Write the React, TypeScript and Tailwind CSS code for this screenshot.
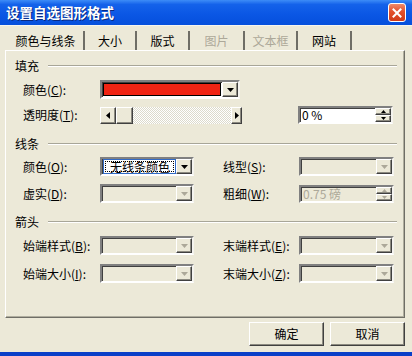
import React from "react";

const font = "font-['Noto_Sans_CJK_SC',sans-serif]";
const sunken =
  "border-2 border-t-[#808080] border-l-[#808080] border-b-white border-r-[#f4f3ee] shadow-[inset_1px_1px_0_#404040]";
const raised =
  "border border-t-white border-l-white border-b-[#404040] border-r-[#404040] shadow-[inset_-1px_-1px_0_#8c8a80]";

function Tri({ dir = "down", disabled }: { dir?: "down" | "left" | "right" | "up"; disabled?: boolean }) {
  const fill = disabled ? "#aca899" : "#000000";
  if (dir === "down")
    return (
      <svg width="7" height="4" viewBox="0 0 7 4">
        <path d="M0 0h7L3.5 4z" fill={fill} />
      </svg>
    );
  if (dir === "up")
    return (
      <svg width="5" height="3" viewBox="0 0 5 3">
        <path d="M0 3h5L2.5 0z" fill={fill} />
      </svg>
    );
  if (dir === "left")
    return (
      <svg width="4" height="7" viewBox="0 0 4 7">
        <path d="M4 0v7L0 3.5z" fill={fill} />
      </svg>
    );
  return (
    <svg width="4" height="7" viewBox="0 0 4 7">
      <path d="M0 0v7L4 3.5z" fill={fill} />
    </svg>
  );
}

function ArrowBtn({ disabled }: { disabled?: boolean }) {
  return (
    <div className={`flex h-full w-[16px] shrink-0 items-center justify-center bg-[#ece9d8] ${raised}`}>
      <Tri disabled={disabled} />
    </div>
  );
}

function Combo({ w, disabled, children }: { w: string; disabled?: boolean; children?: React.ReactNode }) {
  return (
    <div className={`flex h-[19px] ${w} ${sunken} ${disabled ? "bg-[#ece9d8]" : "bg-white"}`}>
      <div className="flex min-w-0 flex-1 items-center">{children}</div>
      <ArrowBtn disabled={disabled} />
    </div>
  );
}

function Spin({ w, disabled, value }: { w: string; disabled?: boolean; value: string }) {
  return (
    <div className={`flex h-[18px] ${w} ${sunken} ${disabled ? "bg-[#ece9d8]" : "bg-white"}`}>
      <div className={`flex flex-1 items-center pl-[2px] text-[12px] leading-none ${disabled ? "text-[#aca899]" : "text-black"}`}>
        {value}
      </div>
      <div className="flex w-[16px] flex-col">
        <div className={`flex flex-1 items-center justify-center bg-[#ece9d8] ${raised}`}>
          <Tri dir="up" disabled={disabled} />
        </div>
        <div className={`flex flex-1 items-center justify-center bg-[#ece9d8] ${raised}`}>
          <svg width="5" height="3" viewBox="0 0 5 3">
            <path d="M0 0h5L2.5 3z" fill={disabled ? "#aca899" : "#000"} />
          </svg>
        </div>
      </div>
    </div>
  );
}

function Label({ text, k, w }: { text: string; k: string; w: string }) {
  return (
    <div className={`${w} shrink-0 text-[12px] leading-none text-black`}>
      {text}(<span className="underline">{k}</span>):
    </div>
  );
}

function Header({ text }: { text: string }) {
  return (
    <div className="flex h-[16px] items-center pl-[9px] pr-[7px]">
      <span className="text-[12px] leading-none text-black">{text}</span>
      <div className="ml-[9px] h-[2px] flex-1 border-t border-b border-t-[#a8a698] border-b-white" />
    </div>
  );
}

const tabs = [
  { t: "颜色与线条", w: "w-[77px]" },
  { t: "大小", w: "w-[52px]" },
  { t: "版式", w: "w-[53px]" },
  { t: "图片", w: "w-[55px]", off: true },
  { t: "文本框", w: "w-[53px]", off: true },
  { t: "网站", w: "w-[54px]" },
];

export default function App() {
  return (
    <div className={`flex h-[356px] w-[412px] flex-col overflow-hidden bg-[#ece9d8] ${font}`}>
      {/* title bar */}
      <div className="flex h-[25px] shrink-0 items-center justify-between bg-[linear-gradient(180deg,#3d8cf7_0%,#1462ea_18%,#0a56e4_60%,#0650dc_100%)] pl-[6px] pr-[6px]">
        <span className="text-[13.5px] font-bold leading-none text-white [text-shadow:1px_1px_0_#0a2a80]">
          设置自选图形格式
        </span>
        <div className="flex h-[19px] w-[18px] items-center justify-center rounded-[3px] border border-white bg-[linear-gradient(180deg,#f08a6a_0%,#e2502c_45%,#d03a18_100%)]">
          <svg width="10" height="10" viewBox="0 0 10 10">
            <path d="M1.5 1.5l7 7M8.5 1.5l-7 7" stroke="#fff" strokeWidth="2" strokeLinecap="square" />
          </svg>
        </div>
      </div>
      <div className="h-[1px] shrink-0 bg-[#f6f5ee]" />

      <div className="flex flex-1 flex-col pl-[5px] pr-[7px]">
        {/* tabs */}
        <div className="flex h-[24px] items-end pl-[3px]">
          {tabs.map((tb) => (
            <div
              key={tb.t}
              className={`flex h-[19px] ${tb.w} items-center justify-center border-r-2 border-r-[#6f6e66] text-[12px] leading-none ${
                tb.off ? "text-[#aca899]" : "text-black"
              }`}
            >
              {tb.t}
            </div>
          ))}
        </div>

        {/* panel */}
        <div className="flex h-[268px] flex-col border border-t-white border-l-white border-b-[#6f6e66] border-r-[#6f6e66] shadow-[inset_-1px_-1px_0_#b0ae9f]">
          <div className="mt-[7px]">
            <Header text="填充" />
          </div>
          <div className="mt-[6px] flex items-center pl-[17px]">
            <Label text="颜色" k="C" w="w-[77px]" />
            <div className={`flex h-[19px] w-[140px] ${sunken} bg-white`}>
              <div className="flex-1 p-[1px]">
                <div className="h-full w-full border border-black bg-[#f02414]" />
              </div>
              <ArrowBtn />
            </div>
          </div>
          <div className="mt-[7px] flex items-center pl-[17px]">
            <Label text="透明度" k="T" w="w-[77px]" />
            <div className="flex h-[17px] w-[142px]">
              <div className={`flex w-[16px] items-center justify-center bg-[#ece9d8] ${raised}`}>
                <Tri dir="left" />
              </div>
              <div className={`w-[17px] bg-[#ece9d8] ${raised}`} />
              <div className="flex-1 bg-[repeating-conic-gradient(#ffffff_0%_25%,#dcdacb_0%_50%)] bg-[length:2px_2px]" />
              <div className={`flex w-[11px] items-center justify-center bg-[#ece9d8] ${raised}`}>
                <Tri dir="right" />
              </div>
            </div>
            <div className="ml-[56px]">
              <Spin w="w-[95px]" value="0 %" />
            </div>
          </div>

          <div className="mt-[12px]">
            <Header text="线条" />
          </div>
          <div className="mt-[5px] flex items-center pl-[17px]">
            <Label text="颜色" k="O" w="w-[77px]" />
            <Combo w="w-[94px]">
              <div className="ml-[1px] h-[15px] w-full border border-[#316ac5] bg-white p-[1px]">
                <div className="flex h-full items-center border border-dotted border-black pl-[4px] text-[12px] leading-none text-black">
                  无线条颜色
                </div>
              </div>
            </Combo>
            <div className="ml-[29px]">
              <Label text="线型" k="S" w="w-[76px]" />
            </div>
            <Combo w="w-[95px]" disabled />
          </div>
          <div className="mt-[8px] flex items-center pl-[17px]">
            <Label text="虚实" k="D" w="w-[77px]" />
            <Combo w="w-[94px]" disabled />
            <div className="ml-[29px]">
              <Label text="粗细" k="W" w="w-[76px]" />
            </div>
            <Spin w="w-[95px]" value="0.75 磅" disabled />
          </div>

          <div className="mt-[11px]">
            <Header text="箭头" />
          </div>
          <div className="mt-[6px] flex items-center pl-[17px]">
            <Label text="始端样式" k="B" w="w-[77px]" />
            <Combo w="w-[94px]" disabled />
            <div className="ml-[29px]">
              <Label text="末端样式" k="E" w="w-[76px]" />
            </div>
            <Combo w="w-[95px]" disabled />
          </div>
          <div className="mt-[9px] flex items-center pl-[17px]">
            <Label text="始端大小" k="I" w="w-[77px]" />
            <Combo w="w-[94px]" disabled />
            <div className="ml-[29px]">
              <Label text="末端大小" k="Z" w="w-[76px]" />
            </div>
            <Combo w="w-[95px]" disabled />
          </div>
        </div>

        {/* buttons */}
        <div className="flex justify-end gap-[6px] pt-[4px]">
          <button className={`h-[24px] w-[75px] bg-[#ece9d8] text-[12px] leading-none text-black ${raised}`}>确定</button>
          <button className={`h-[24px] w-[75px] bg-[#ece9d8] text-[12px] leading-none text-black ${raised}`}>取消</button>
        </div>
      </div>

      <div className="h-[4px] shrink-0 bg-[#0a3fc8]" />
    </div>
  );
}
